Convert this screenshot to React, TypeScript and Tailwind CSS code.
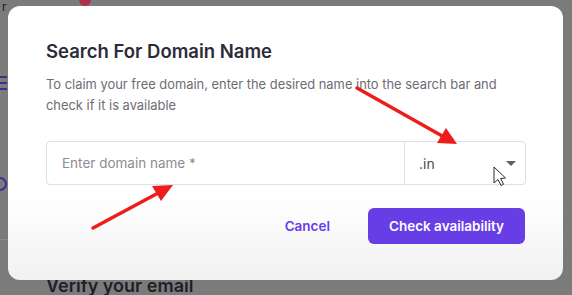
function Arrows() {
  return (
    <svg className="pointer-events-none absolute inset-0" width="572" height="295" viewBox="0 0 572 295">
      {/* arrow pointing at the input */}
      <line x1="93" y1="228" x2="160" y2="192" stroke="#ee1c1c" strokeWidth="3.5" strokeLinecap="round" />
      <polygon points="173,185 152,186 161,201" fill="#ee1c1c" />
      {/* arrow pointing at the extension select */}
      <line x1="357" y1="88" x2="444" y2="137" stroke="#ee1c1c" strokeWidth="3.5" strokeLinecap="round" />
      <polygon points="457,144 446,128 437,143" fill="#ee1c1c" />
      {/* mouse pointer */}
      <path
        d="M494 167 L494 183 L498 179.5 L501 185.5 L503.5 184.3 L500.6 178.5 L505.5 178 Z"
        fill="#ffffff"
        stroke="#2b2b2b"
        strokeWidth="1"
        strokeLinejoin="round"
      />
    </svg>
  );
}

export default function App() {
  return (
    <div className="relative h-[295px] w-[572px] overflow-hidden bg-[#7b7b7b] font-['Inter',sans-serif]">
      {/* Page behind the dialog */}
      <div className="flex h-full flex-col">
        <div className="flex h-[14px] items-start gap-[72px] pl-[2px] pt-[1px]">
          <span className="text-[12px] leading-[12px] text-[#222]">r</span>
          <span className="mt-[-7px] h-[12px] w-[12px] rounded-full bg-[#b0304a]" />
        </div>
        <div className="mt-[62px] flex w-[7px] flex-col gap-[4px]">
          <span className="h-[2px] bg-[#3d2e8c]" />
          <span className="h-[2px] bg-[#3d2e8c]" />
          <span className="h-[2px] bg-[#3d2e8c]" />
        </div>
        <div className="mt-[87px] h-[14px] w-[7px] rounded-r-full border-2 border-l-0 border-[#3d2e8c]" />
        <div className="mt-[48px] h-px w-[10px] bg-[#8a8a8a]" />
        <div className="mt-auto pl-[46px] text-[18px] font-semibold leading-[18px] text-[#1e1e28]">
          Verify your email
        </div>
      </div>

      {/* Dialog */}
      <div className="absolute left-[8px] top-[6px] h-[274px] w-[555px] rounded-[12px] bg-gradient-to-b from-white from-70% to-[#f1f1f1] px-[38px] pt-[33px]">
        <h2 className="text-[18.5px] font-semibold leading-[24px] text-[#2c2c38]">Search For Domain Name</h2>
        <p className="mt-[11px] w-[480px] text-[12.9px] leading-[21px] text-[#6d6d75]">
          To claim your free domain, enter the desired name into the search bar and check if it is available
        </p>

        <div className="mt-[25px] flex h-[44px] w-[480px] rounded-[4px] border border-[#dedee3] bg-white">
          <div className="flex flex-1 items-center pl-[15px] text-[13.5px] text-[#8c8c94]">Enter domain name *</div>
          <div className="flex w-[121px] items-center justify-between border-l border-[#dedee3] pl-[14px] pr-[7px] text-[14px] text-[#4a4a55]">
            <span>.in</span>
            <svg width="10" height="5" viewBox="0 0 10 5" className="mr-[2px]">
              <polygon points="0,0 10,0 5,5" fill="#5f5f68" />
            </svg>
          </div>
        </div>

        <div className="mt-[23px] flex items-center justify-end gap-[38px]">
          <button className="text-[13.5px] font-semibold text-[#673de6]">Cancel</button>
          <button className="h-[36px] w-[157px] rounded-[6px] bg-[#673de6] text-[13.5px] font-semibold text-white">
            Check availability
          </button>
        </div>
      </div>

      <Arrows />
    </div>
  );
}
